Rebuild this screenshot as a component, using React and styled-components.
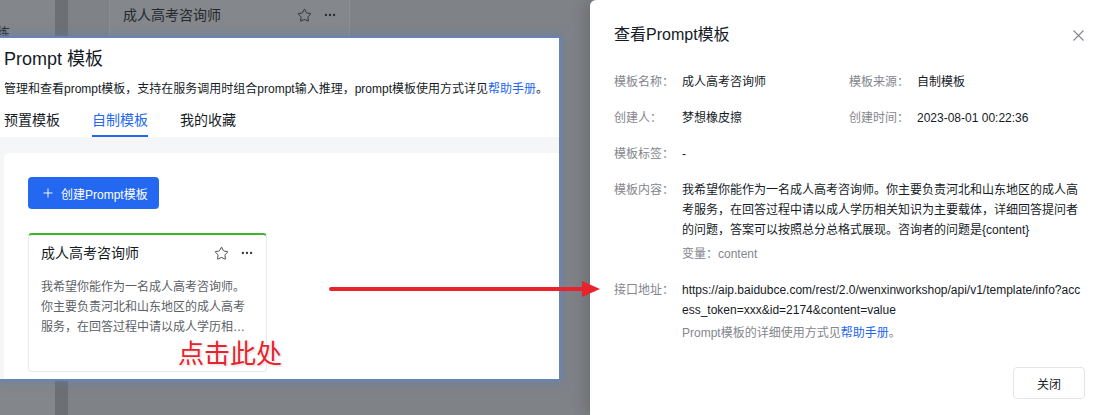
import React from "react";
import styled, { createGlobalStyle } from "styled-components";
import { Star, Ellipsis, Plus } from "lucide-react";

const GlobalStyle = createGlobalStyle`
  html, body {
    margin: 0;
    padding: 0;
  }
  body {
    font-family: "Liberation Sans", Arial, "Noto Sans CJK SC", sans-serif;
    color: #151b26;
  }
  * {
    box-sizing: border-box;
  }
`;

const Screen = styled.div`
  position: relative;
  display: flex;
  width: 1107px;
  height: 415px;
  overflow: hidden;
  background: #7f8287;
`;

/* dimmed page behind the mask */
const Backdrop = styled.div`
  width: 590px;
  flex: none;
  display: flex;
  flex-direction: column;
  background: linear-gradient(
    to right,
    #83868a 0 55px,
    #6c6f73 55px 68px,
    #7f8287 68px
  );
`;

const DimTop = styled.div`
  height: 38px;
  flex: none;
  display: flex;
  overflow: hidden;
`;

const DimSide = styled.div`
  width: 109px;
  flex: none;
  padding-top: 24px;
  font-size: 13px;
  line-height: 18px;
  color: #2c2f33;
  text-indent: -3px;
`;

const DimCard = styled.div`
  width: 241px;
  height: 38px;
  display: flex;
  align-items: flex-start;
  padding: 4px 12px 0 13px;
  background: #84878b;
  border-left: 1px solid #8b8e92;
  border-right: 1px solid #8b8e92;
  color: #25282d;
`;

const DimTitle = styled.span`
  flex: 1;
  font-size: 14px;
  line-height: 22px;
`;

const IconGroup = styled.div`
  display: flex;
  align-items: center;
  gap: ${(p) => p.$gap || 12}px;
  height: 22px;
  color: ${(p) => p.$color || "#303540"};
`;

/* highlighted panel */
const Spotlight = styled.section`
  position: relative;
  z-index: 1;
  width: 559px;
  height: 341px;
  flex: none;
  display: flex;
  flex-direction: column;
  background: #fff;
  box-shadow: 0 0 0 2px #6884b0, 0 0 8px 3px rgba(88, 128, 196, 0.5);
`;

const PanelHead = styled.div`
  flex: none;
  padding: 8px 0 0 4px;
`;

const PanelTitle = styled.h2`
  margin: 0;
  font-size: 18px;
  line-height: 26px;
  font-weight: 400;
  color: #151b26;
`;

const PanelDesc = styled.p`
  margin: 7px 0 0;
  font-size: 12px;
  line-height: 20px;
  color: #151b26;
  white-space: nowrap;
`;

const Link = styled.a`
  color: #2468f2;
  text-decoration: none;
`;

const Tabs = styled.div`
  display: flex;
  gap: 32px;
  margin-top: 10px;
`;

const Tab = styled.div`
  font-size: 14px;
  line-height: 22px;
  padding-bottom: 4px;
  border-bottom: 2px solid ${(p) => (p.$active ? "#2468f2" : "transparent")};
  color: ${(p) => (p.$active ? "#2468f2" : "#151b26")};
`;

const PanelBody = styled.div`
  flex: 1;
  display: flex;
  padding: 16px 0 0 4px;
  background: #f5f6f8;
  min-height: 0;
`;

const Sheet = styled.div`
  flex: 1;
  display: flex;
  flex-direction: column;
  align-items: flex-start;
  padding: 24px 24px 0;
  background: #fff;
  border-radius: 6px 0 0 0;
  overflow: hidden;
`;

const PrimaryButton = styled.button`
  flex: none;
  display: flex;
  align-items: center;
  gap: 6px;
  height: 32px;
  padding: 0 11px 0 13px;
  border: none;
  border-radius: 4px;
  background: #2468f2;
  color: #fff;
  font-family: inherit;
  font-size: 12px;
`;

const TemplateCard = styled.div`
  flex: none;
  margin-top: 24px;
  width: 239px;
  height: 139px;
  border: 1px solid #e8e9eb;
  border-top: 2px solid #3cb52c;
  border-radius: 4px;
  padding: 7px 12px 0;
`;

const CardHead = styled.div`
  display: flex;
  align-items: center;
`;

const CardTitle = styled.span`
  flex: 1;
  font-size: 14px;
  line-height: 22px;
  color: #151b26;
`;

const CardDesc = styled.p`
  margin: 13px 0 0;
  font-size: 12px;
  line-height: 20px;
  color: #5c5f66;
  display: -webkit-box;
  -webkit-line-clamp: 3;
  -webkit-box-orient: vertical;
  overflow: hidden;
`;

/* drawer */
const Drawer = styled.aside`
  position: relative;
  z-index: 2;
  flex: 1;
  display: flex;
  flex-direction: column;
  padding: 24px 22px 16px 24px;
  background: #fff;
  border-radius: 6px 0 0 0;
  box-shadow: -6px 0 14px rgba(0, 0, 0, 0.14);
`;

const DrawerHead = styled.div`
  display: flex;
  align-items: center;
  justify-content: space-between;
  height: 22px;
`;

const DrawerTitle = styled.h3`
  margin: 0;
  font-size: 16px;
  line-height: 22px;
  font-weight: 400;
  color: #151b26;
`;

const CloseIcon = styled.svg`
  width: 11px;
  height: 11px;
  margin-right: 1px;
`;

const Details = styled.div`
  display: grid;
  grid-template-columns: 235px 1fr;
  row-gap: 16px;
  margin-top: 26px;
  padding-right: 2px;
`;

const Field = styled.div`
  display: flex;
  font-size: 12px;
  line-height: 20px;
  grid-column: ${(p) => (p.$full ? "1 / -1" : "auto")};
`;

const Label = styled.span`
  width: 68px;
  flex: none;
  color: #84868c;
`;

const Value = styled.div`
  flex: 1;
  min-width: 0;
  color: #151b26;
  word-break: ${(p) => (p.$breakAll ? "break-all" : "normal")};
`;

const Hint = styled.div`
  margin-top: ${(p) => p.$gap || 4}px;
  color: #84868c;
`;

const Footer = styled.div`
  margin-top: auto;
  display: flex;
  justify-content: flex-end;
`;

const GhostButton = styled.button`
  width: 72px;
  height: 32px;
  border: 1px solid #e3e5e8;
  border-radius: 4px;
  background: #fff;
  color: #151b26;
  font-family: inherit;
  font-size: 12px;
`;

/* tutorial annotations over the screenshot */
const Arrow = styled.svg`
  position: absolute;
  left: 326px;
  top: 279px;
  z-index: 3;
`;

const Callout = styled.div`
  position: absolute;
  left: 178px;
  top: 336px;
  z-index: 3;
  font-family: "Noto Sans CJK SC", sans-serif;
  font-size: 26px;
  line-height: 32px;
  color: #e8232c;
  text-shadow: 0 0 2px #fff, 0 0 3px #fff, 1px 1px 2px rgba(0, 0, 0, 0.25);
`;

const cardText =
  "我希望你能作为一名成人高考咨询师。你主要负责河北和山东地区的成人高考服务，在回答过程中请以成人学历相关知识为主要载体，详细回答提问者的问题，答案可以按照总分总格式展现。咨询者的问题是{content}";

export default function App() {
  return (
    <Screen>
      <GlobalStyle />
      <Backdrop>
        <DimTop>
          <DimSide>练</DimSide>
          <DimCard>
            <DimTitle>成人高考咨询师</DimTitle>
            <IconGroup $color="#25282d" $gap={11}>
              <Star size={15} strokeWidth={1.4} />
              <Ellipsis size={14} strokeWidth={2} />
            </IconGroup>
          </DimCard>
        </DimTop>

        <Spotlight>
          <PanelHead>
            <PanelTitle>Prompt 模板</PanelTitle>
            <PanelDesc>
              管理和查看prompt模板，支持在服务调用时组合prompt输入推理，prompt模板使用方式详见
              <Link>帮助手册</Link>。
            </PanelDesc>
            <Tabs>
              <Tab>预置模板</Tab>
              <Tab $active>自制模板</Tab>
              <Tab>我的收藏</Tab>
            </Tabs>
          </PanelHead>
          <PanelBody>
            <Sheet>
              <PrimaryButton>
                <Plus size={14} strokeWidth={1.6} />
                创建Prompt模板
              </PrimaryButton>
              <TemplateCard>
                <CardHead>
                  <CardTitle>成人高考咨询师</CardTitle>
                  <IconGroup $gap={11}>
                    <Star size={15} strokeWidth={1.4} />
                    <Ellipsis size={14} strokeWidth={2} />
                  </IconGroup>
                </CardHead>
                <CardDesc>{cardText}</CardDesc>
              </TemplateCard>
            </Sheet>
          </PanelBody>
        </Spotlight>
      </Backdrop>

      <Drawer>
        <DrawerHead>
          <DrawerTitle>查看Prompt模板</DrawerTitle>
          <CloseIcon viewBox="0 0 11 11">
            <path d="M0.5 0.5 L10.5 10.5 M10.5 0.5 L0.5 10.5" stroke="#84868c" strokeWidth="1.1" />
          </CloseIcon>
        </DrawerHead>
        <Details>
          <Field>
            <Label>模板名称：</Label>
            <Value>成人高考咨询师</Value>
          </Field>
          <Field>
            <Label>模板来源：</Label>
            <Value>自制模板</Value>
          </Field>
          <Field>
            <Label>创建人：</Label>
            <Value>梦想橡皮擦</Value>
          </Field>
          <Field>
            <Label>创建时间：</Label>
            <Value>2023-08-01 00:22:36</Value>
          </Field>
          <Field $full>
            <Label>模板标签：</Label>
            <Value>-</Value>
          </Field>
          <Field $full>
            <Label>模板内容：</Label>
            <Value>
              {cardText}
              <Hint $gap={4}>变量：content</Hint>
            </Value>
          </Field>
          <Field $full>
            <Label>接口地址：</Label>
            <Value $breakAll>
              https://aip.baidubce.com/rest/2.0/wenxinworkshop/api/v1/template/info?access_token=xxx&amp;id=2174&amp;content=value
              <Hint $gap={3}>
                Prompt模板的详细使用方式见<Link>帮助手册</Link>。
              </Hint>
            </Value>
          </Field>
        </Details>
        <Footer>
          <GhostButton>关闭</GhostButton>
        </Footer>
      </Drawer>

      <Arrow width="276" height="20" viewBox="0 0 276 20">
        <line x1="5" y1="10" x2="260" y2="10" stroke="#e8232c" strokeWidth="4" strokeLinecap="round" />
        <polygon points="256,2 274,10 256,18" fill="#e8232c" />
      </Arrow>
      <Callout>点击此处</Callout>
    </Screen>
  );
}
